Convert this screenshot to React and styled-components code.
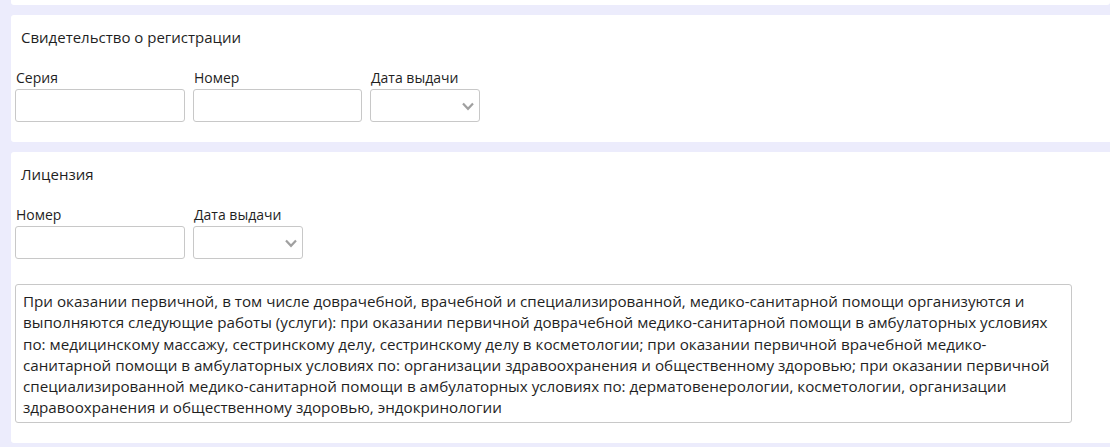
import React from "react";
import styled, { createGlobalStyle } from "styled-components";

const Global = createGlobalStyle`
  html, body { margin: 0; padding: 0; background: #ececfc; }
  body { font-family: "Open Sans", "Noto Sans", sans-serif; color: #1f1f1f; }
  * { box-sizing: border-box; }
`;

const Page = styled.div`
  display: flex;
  flex-direction: column;
  gap: 10px;
  padding: 0 0 3px 11px;
  width: 1110px;
  overflow: hidden;
`;

const Card = styled.section`
  background: #fff;
  border-radius: ${(p) => (p.$stub ? "0 0 3px 3px" : "3px 0 0 3px")};
  height: ${(p) => (p.$stub ? "5px" : "auto")};
  padding: ${(p) => (p.$stub ? "0" : "12px 4px 20px")};
  display: flex;
  flex-direction: column;
`;

const Title = styled.div`
  font-size: 15px;
  line-height: 21px;
  padding-left: 6px;
  margin-bottom: 20px;
`;

const Row = styled.div`
  display: flex;
  gap: 8px;
`;

const Field = styled.div`
  display: flex;
  flex-direction: column;
  gap: 3px;
  width: ${(p) => p.$w}px;
`;

const Label = styled.label`
  font-size: 14px;
  line-height: 18px;
  padding-left: 1px;
  margin-top: 1px;
  margin-bottom: -1px;
`;

const Input = styled.input`
  height: 33px;
  width: 100%;
  border: 1px solid #c8c8c8;
  border-radius: 3px;
  background: #fff;
  font: inherit;
  font-size: 14px;
  padding: 0 6px;
  outline: none;
`;

const DateBox = styled.div`
  height: 33px;
  width: 100%;
  border: 1px solid #c8c8c8;
  border-radius: 3px;
  background: #fff;
  display: flex;
  align-items: center;
  justify-content: flex-end;
  padding-right: 4px;
`;

const Area = styled.textarea`
  margin-top: 25px;
  width: 1057px;
  height: 139px;
  border: 1px solid #c8c8c8;
  border-radius: 3px;
  font-family: "Open Sans", "Noto Sans", sans-serif;
  font-size: 15.2px;
  line-height: 21.3px;
  color: #1f1f1f;
  padding: 6px 7px;
  resize: none;
  overflow: hidden;
  outline: none;
`;

const Chevron = () => (
  <svg width="14" height="10" viewBox="0 0 14 10">
    <path d="M2 2.5 L7 7.8 L12 2.5" fill="none" stroke="#a0a0a0" strokeWidth="2.2" />
  </svg>
);

const DateField = ({ label }) => (
  <Field $w={110}>
    <Label>{label}</Label>
    <DateBox>
      <Chevron />
    </DateBox>
  </Field>
);

const TextField = ({ label, w }) => (
  <Field $w={w}>
    <Label>{label}</Label>
    <Input />
  </Field>
);

const text =
  "При оказании первичной, в том числе доврачебной, врачебной и специализированной, медико-санитарной помощи организуются и выполняются следующие работы (услуги): при оказании первичной доврачебной медико-санитарной помощи в амбулаторных условиях по: медицинскому массажу, сестринскому делу, сестринскому делу в косметологии; при оказании первичной врачебной медико-санитарной помощи в амбулаторных условиях по: организации здравоохранения и общественному здоровью; при оказании первичной специализированной медико-санитарной помощи в амбулаторных условиях по: дерматовенерологии, косметологии, организации здравоохранения и общественному здоровью, эндокринологии";

export default function App() {
  return (
    <>
      <Global />
      <Page>
        <Card $stub />
        <Card>
          <Title>Свидетельство о регистрации</Title>
          <Row>
            <TextField label="Серия" w={170} />
            <TextField label="Номер" w={169} />
            <DateField label="Дата выдачи" />
          </Row>
        </Card>
        <Card>
          <Title>Лицензия</Title>
          <Row>
            <TextField label="Номер" w={170} />
            <DateField label="Дата выдачи" />
          </Row>
          <Area readOnly defaultValue={text} />
        </Card>
      </Page>
    </>
  );
}
